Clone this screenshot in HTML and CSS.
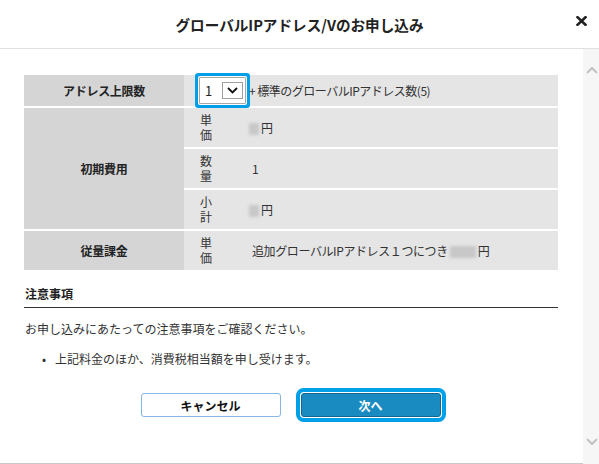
FILE: index.html
```html
<!DOCTYPE html>
<html lang="ja">
<head>
<meta charset="utf-8">
<title>グローバルIPアドレス/Vのお申し込み</title>
<link rel="stylesheet" href="styles.css">
</head>
<body>
<div class="dialog">
  <header class="dlg-head">
    <h1 class="dlg-title">グローバルIPアドレス/Vのお申し込み</h1>
    <button class="close" aria-label="閉じる">
      <svg width="11" height="10" viewBox="0 0 11 10"><path d="M1.5 1.2 L9.5 8.8 M9.5 1.2 L1.5 8.8" stroke="#222" stroke-width="2.6" stroke-linecap="square"/></svg>
    </button>
  </header>
  <div class="dlg-body">
    <div class="content">
      <table class="spec">
        <tr>
          <th class="h">アドレス上限数</th>
          <td class="v" colspan="2">
            <div class="row-inline">
              <div class="select" role="combobox">
                <span class="sel-val">1</span>
                <span class="sel-btn">
                  <svg width="11" height="7" viewBox="0 0 11 7"><path d="M1 1 L5.5 5.5 L10 1" fill="none" stroke="#111" stroke-width="1.8"/></svg>
                </span>
              </div>
              <span class="plus">+ 標準のグローバルIPアドレス数(5)</span>
            </div>
          </td>
        </tr>
        <tr>
          <th class="h" rowspan="3">初期費用</th>
          <td class="lbl">単価</td>
          <td class="val"><span class="blur"></span>円</td>
        </tr>
        <tr>
          <td class="lbl">数量</td>
          <td class="val">1</td>
        </tr>
        <tr>
          <td class="lbl">小計</td>
          <td class="val"><span class="blur"></span>円</td>
        </tr>
        <tr>
          <th class="h">従量課金</th>
          <td class="lbl">単価</td>
          <td class="val">追加グローバルIPアドレス１つにつき<span class="blur wide"></span>円</td>
        </tr>
      </table>

      <h2 class="sec-title">注意事項</h2>
      <p class="note">お申し込みにあたっての注意事項をご確認ください。</p>
      <ul class="bullets">
        <li><span class="dot">•</span>上記料金のほか、消費税相当額を申し受けます。</li>
      </ul>

      <div class="actions">
        <button class="btn btn-cancel">キャンセル</button>
        <button class="btn btn-next">次へ</button>
      </div>
    </div>
    <div class="scrollbar">
      <svg width="12" height="8" viewBox="0 0 12 8"><path d="M1 7 L6 2 L11 7" fill="none" stroke="#c2c2c2" stroke-width="2"/></svg>
      <svg width="12" height="8" viewBox="0 0 12 8"><path d="M1 1 L6 6 L11 1" fill="none" stroke="#c2c2c2" stroke-width="2"/></svg>
    </div>
  </div>
</div>
</body>
</html>
```
FILE: styles.css
```css
* { box-sizing: border-box; }
html, body { margin: 0; padding: 0; }
body {
  width: 599px;
  height: 464px;
  overflow: hidden;
  background: #fff;
  color: #333;
  font-family: "Noto Sans CJK JP", "Noto Sans", sans-serif;
  font-size: 12px;
}
.dialog {
  display: flex;
  flex-direction: column;
  height: 464px;
}
.dlg-head {
  height: 49px;
  flex: none;
  border-bottom: 1px solid #e0e0e0;
  display: flex;
  align-items: center;
  justify-content: center;
  position: relative;
}
.dlg-title {
  margin: 0;
  font-size: 14.6px;
  font-weight: bold;
  color: #222;
  line-height: 20px;
  padding-top: 2px;
}
.close {
  position: absolute;
  right: 12px;
  top: 16px;
  border: 0;
  background: none;
  padding: 0;
  width: 11px;
  height: 10px;
  display: flex;
}
.dlg-body {
  flex: 1;
  display: flex;
  min-height: 0;
}
.content {
  flex: 1;
  padding: 24px 25px 0 24px;
  border-bottom: 1px solid #c8c8c8;
}
.scrollbar {
  width: 16px;
  flex: none;
  background: #f6f6f6;
  display: flex;
  flex-direction: column;
  justify-content: space-between;
  align-items: center;
  padding: 17px 0 18px 2px;
}
.spec {
  width: 100%;
  border-collapse: separate;
  border-spacing: 0 2px;
}
.spec th.h {
  width: 160px;
  background: #d5d5d5;
  font-weight: bold;
  text-align: center;
  vertical-align: middle;
  color: #222;
  padding: 0;
  letter-spacing: -0.3px;
}
.spec td {
  background: #e5e5e5;
  vertical-align: middle;
  padding: 0;
}
.spec td.v {
  height: 31px;
  padding: 2px 0 2px 15px;
}
.spec td.lbl {
  width: 44px;
  max-width: 44px;
  padding: 5px 16px;
  line-height: 14.5px;
  height: 39px;
  word-break: break-all;
}
.spec td.val {
  padding-left: 24px;
  line-height: 14px;
  letter-spacing: -0.4px;
}
.row-inline {
  display: flex;
  align-items: center;
}
.select {
  width: 47px;
  height: 27px;
  border: 1px solid #a8a8a8;
  background: #fff;
  display: flex;
  align-items: center;
  justify-content: space-between;
  padding: 0 2px 0 5px;
  border-radius: 1px;
  box-shadow: 0 0 0 1px #fff, 0 0 0 4px #00a0e9;
  font-size: 13px;
  color: #222;
}
.sel-btn {
  width: 21px;
  height: 17px;
  border: 1px solid #a0a0a0;
  display: flex;
  align-items: center;
  justify-content: center;
}
.plus {
  margin-left: 3px;
  letter-spacing: -0.5px;
}
.blur {
  display: inline-block;
  width: 10px;
  height: 12px;
  background: #c8c8c8;
  filter: blur(1.5px);
  vertical-align: -2px;
  margin-left: -3px;
  margin-right: 2px;
}
.blur.wide {
  width: 26px;
  margin-left: 2px;
}
.sec-title {
  margin: 13px 0 0;
  font-size: 12px;
  font-weight: bold;
  line-height: 18px;
  padding: 0 0 4px 1px;
  border-bottom: 1px solid #333;
  color: #222;
}
.note {
  margin: 12px 0 0 1px;
  line-height: 18px;
}
.bullets {
  list-style: none;
  margin: 12px 0 0;
  padding: 0 0 0 18px;
}
.bullets li {
  display: flex;
  line-height: 18px;
}
.dot {
  width: 13px;
  flex: none;
}
.actions {
  display: flex;
  justify-content: center;
  gap: 20px;
  margin-top: 25px;
  padding-right: 1px;
}
.btn {
  width: 140px;
  height: 24px;
  font-family: inherit;
  font-size: 12px;
  font-weight: bold;
  border-radius: 3px;
  padding: 0;
}
.btn-cancel {
  background: #fff;
  border: 1px solid #86b6e6;
  color: #111;
}
.btn-next {
  background: #1a8bc1;
  border: 1px solid #17668f;
  color: #fff;
  box-shadow: 0 0 0 1px #fff, 0 0 0 5px #00a0e9;
}
```
